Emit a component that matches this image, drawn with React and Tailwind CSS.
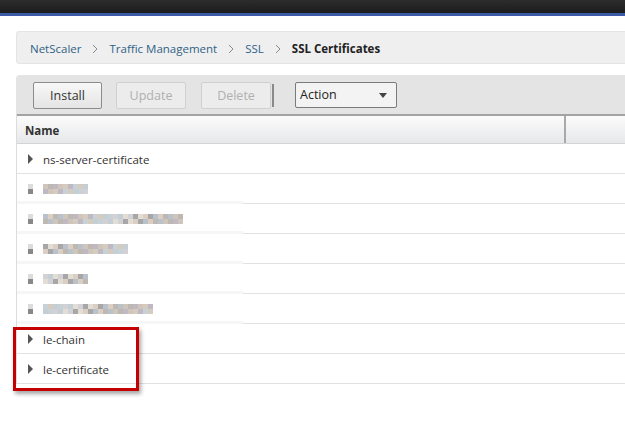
import React from 'react';

const font = { fontFamily: '"Open Sans", "Liberation Sans", sans-serif' };

const palette = ['#cfc5bb', '#c3cfd4', '#dacfc2', '#c0b8c2', '#d2d2d6', '#b9c2ca', '#d6cbbf', '#e2ddd5', '#bdb8b2', '#c8d1d6', '#a9a6a8'];

const Arrow = () => (
  <span className="inline-block w-0 h-0 border-l-[5px] border-l-[#555] border-y-[5px] border-y-transparent" />
);

const Chevron = () => (
  <svg width="6" height="10" viewBox="0 0 6 10" className="mx-[11px] mt-[1px]">
    <path d="M1 1 L5 5 L1 9" fill="none" stroke="#8a8a8a" strokeWidth="1" />
  </svg>
);

const Mosaic = ({ cols, seed }) => {
  const cells = [];
  for (let r = 0; r < 2; r++) {
    for (let c = 0; c < cols; c++) {
      const idx = (c * 7 + r * 3 + seed * 5 + ((c * c) % 4)) % palette.length;
      cells.push(
        <div key={`${r}-${c}`} className="w-[5px] h-[5px]" style={{ backgroundColor: palette[idx] }} />
      );
    }
  }
  return (
    <div className="grid" style={{ gridTemplateColumns: `repeat(${cols}, 5px)` }}>
      {cells}
    </div>
  );
};

const blurred = [
  { cols: 9 },
  { cols: 28 },
  { cols: 17 },
  { cols: 9 },
  { cols: 22 },
];

const Row = ({ label }) => (
  <div className="flex items-center h-[30px] border-b border-[#e2e2e2] pl-[11px]">
    <Arrow />
    <span className="ml-[10px] pt-[2px] text-[11.5px] text-[#333]">{label}</span>
  </div>
);

const BlurRow = ({ cols, seed }) => (
  <div className="flex h-[30px]">
    <div className="w-[226px] flex items-center pl-[11px] pt-[2px] border-b-[3px] border-[#f6f6f6]">
      <div className="flex flex-col">
        <div className="w-[5px] h-[5px] bg-[#dcdcdc]" />
        <div className="w-[5px] h-[5px] bg-[#888]" />
      </div>
      <div className="ml-[10px]">
        <Mosaic cols={cols} seed={seed} />
      </div>
    </div>
    <div className="flex-1 border-b border-[#e2e2e2]" />
  </div>
);

export default function App() {
  return (
    <div className="relative w-[625px] h-[431px] overflow-hidden bg-white" style={font}>
      <div className="h-[13px] bg-gradient-to-b from-[#2c2c2c] to-[#1c1c1c]" />
      <div className="h-[3px] bg-[#3c5aa6]" />

      <div className="pl-[16px] pt-[15px]">
        <div className="w-[700px] h-[33px] bg-[#efefef] border border-[#e4e4e4] rounded-[3px] flex items-center pl-[13px] pt-[2px] text-[11.5px] text-[#2f6286]">
          <span>NetScaler</span>
          <Chevron />
          <span>Traffic Management</span>
          <Chevron />
          <span>SSL</span>
          <Chevron />
          <span className="font-bold text-[#222]">SSL Certificates</span>
        </div>

        <div className="mt-[11px] w-[700px] h-[39px] bg-[#e4e4e4] rounded-tl-[4px] flex items-start pt-[7px] pl-[17px]">
          <div className="w-[69px] h-[27px] flex items-center justify-center pt-[2px] border border-[#8c8c8c] rounded-[2px] bg-gradient-to-b from-[#f8f8f8] to-[#e4e4e4] text-[12.5px] text-[#333]">
            Install
          </div>
          <div className="ml-[14px] w-[70px] h-[27px] flex items-center justify-center pt-[2px] border border-[#d0d0d0] rounded-[2px] bg-[#ececec] text-[12.5px] text-[#b0b0b0]">
            Update
          </div>
          <div className="ml-[15px] w-[70px] h-[27px] flex items-center justify-center pt-[2px] border border-[#d0d0d0] rounded-[2px] bg-[#ececec] text-[12.5px] text-[#b0b0b0]">
            Delete
          </div>
          <div className="ml-[1px] mt-[2px] w-[2px] h-[23px] bg-[#8a8a8a]" />
          <div className="ml-[21px] w-[102px] h-[26px] flex items-center justify-between pt-[1px] border border-[#7a7a7a] rounded-[2px] bg-[#f3f3f3] pl-[4px] pr-[9px] text-[12.5px] text-[#222]">
            <span>Action</span>
            <span className="w-0 h-0 border-x-[4px] border-x-transparent border-t-[5px] border-t-[#444]" />
          </div>
        </div>

        <div className="w-[700px] border-l border-[#dcdcdc]">
          <div className="flex h-[30px] border-t-2 border-[#a3a3a3] border-b border-b-[#d4d4d4] bg-gradient-to-b from-[#fbfbfb] to-[#e7e8ea]">
            <div className="w-[549px] flex items-center pl-[8px] pt-[2px] text-[11.5px] font-bold text-[#333] border-r-2 border-[#a9a9a9]">
              Name
            </div>
            <div className="flex-1" />
          </div>
          <Row label="ns-server-certificate" />
          {blurred.map((b, i) => (
            <BlurRow key={i} cols={b.cols} seed={i} />
          ))}
          <Row label="le-chain" />
          <Row label="le-certificate" />
        </div>
      </div>

      <div className="absolute left-[13px] top-[327px] w-[126px] h-[64px] border-[3px] border-[#c40000] shadow-[2px_3px_4px_rgba(0,0,0,0.35)]" />
    </div>
  );
}
